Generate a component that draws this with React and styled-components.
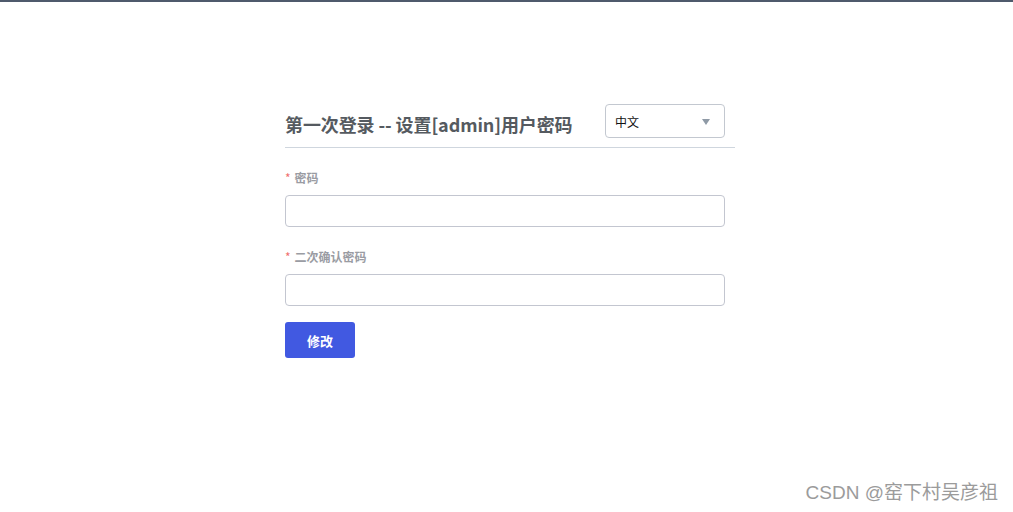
import React from "react";
import styled, { createGlobalStyle } from "styled-components";

const Global = createGlobalStyle`
  html, body { margin: 0; padding: 0; background: #fff; }
  body {
    font-family: "Noto Sans CJK SC", "Noto Sans", sans-serif;
    border-top: 2px solid #4f5a6c;
    min-height: 510px;
  }
`;

const Page = styled.div`
  position: relative;
  height: 510px;
  display: flex;
  justify-content: flex-start;
  padding-left: 285px;
  padding-top: 102px;
  box-sizing: border-box;
`;

const Panel = styled.div`
  width: 450px;
`;

const Header = styled.div`
  display: flex;
  justify-content: space-between;
  align-items: flex-end;
  padding-right: 10px;
  padding-bottom: 9px;
  border-bottom: 1px solid #cfd6de;
`;

const Title = styled.h2`
  margin: 0 0 2px 0;
  font-size: 18px;
  line-height: 24px;
  font-weight: 700;
  color: #555a60;
  letter-spacing: -0.1px;
`;

const Select = styled.div`
  width: 120px;
  height: 34px;
  box-sizing: border-box;
  border: 1px solid #c3c8d0;
  border-radius: 4px;
  display: flex;
  align-items: center;
  justify-content: space-between;
  padding: 0 14px 0 9px;
  font-size: 12px;
  color: #111;
`;

const Caret = styled.span`
  width: 0;
  height: 0;
  border-left: 4px solid transparent;
  border-right: 4px solid transparent;
  border-top: 6px solid #8f9aa6;
  margin-top: 1px;
`;

const Body = styled.div`
  padding: 20px 10px 0 0;
  display: flex;
  flex-direction: column;
`;

const Field = styled.div`
  margin-bottom: ${(p) => p.$mb}px;
`;

const Label = styled.div`
  font-size: 12px;
  line-height: 20px;
  font-weight: 700;
  color: #9a9ca3;
  margin-bottom: 7px;
  display: flex;
  align-items: center;
`;

const Star = styled.span`
  color: #f07070;
  margin-right: 4px;
  font-weight: 400;
`;

const Input = styled.input`
  display: block;
  width: 440px;
  height: 32px;
  box-sizing: border-box;
  border: 1px solid #c3c6d0;
  border-radius: 4px;
  outline: none;
  padding: 0 10px;
`;

const Button = styled.button`
  width: 70px;
  height: 36px;
  border: none;
  border-radius: 3px;
  background: #4159e1;
  color: #fff;
  font-family: inherit;
  font-size: 13px;
  font-weight: 700;
  cursor: pointer;
  padding: 0;
`;

const Watermark = styled.div`
  position: absolute;
  right: 15px;
  bottom: 8px;
  font-size: 19px;
  color: #9b9b9b;
  text-shadow: 1px 1px 1px #fff;
  font-family: "Liberation Sans", "Noto Sans CJK SC", sans-serif;
`;

export default function App() {
  return (
    <>
      <Global />
      <Page>
        <Panel>
          <Header>
            <Title>第一次登录 -- 设置[admin]用户密码</Title>
            <Select>
              <span>中文</span>
              <Caret />
            </Select>
          </Header>
          <Body>
            <Field $mb={20}>
              <Label><Star>*</Star>密码</Label>
              <Input type="password" />
            </Field>
            <Field $mb={16}>
              <Label><Star>*</Star>二次确认密码</Label>
              <Input type="password" />
            </Field>
            <div>
              <Button>修改</Button>
            </div>
          </Body>
        </Panel>
        <Watermark>CSDN @窑下村吴彦祖</Watermark>
      </Page>
    </>
  );
}
